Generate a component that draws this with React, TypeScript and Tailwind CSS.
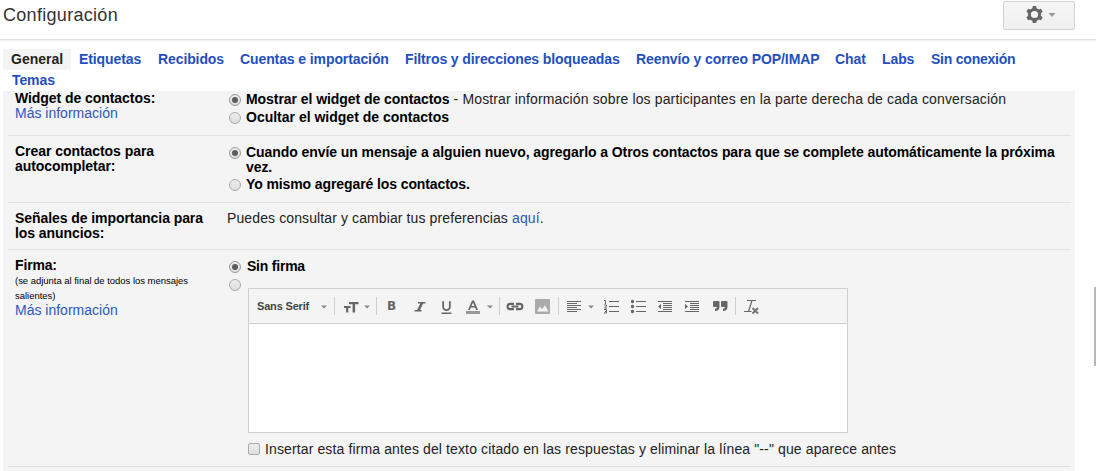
import React from "react";
import { MdFormatUnderlined } from "react-icons/md";

function Radio({ checked = false }: { checked?: boolean }) {
  return (
    <span className={"flex size-3 shrink-0 items-center justify-center rounded-full border bg-linear-to-b from-[#eeeeee] to-[#dedede] " + (checked ? "border-[#999]" : "border-[#aaa]")}>
      {checked && <span className="size-1.5 rounded-full bg-[#5c5c5c]" />}
    </span>
  );
}

function Caret() {
  return (
    <svg className="block" width="6" height="20" viewBox="0 0 6 20">
      <path d="M0 8.5h6L3 11.5z" fill="#888" />
    </svg>
  );
}

function Separator() {
  return <div className="mt-[8px] h-[18px] w-px bg-[#cfcfcf]" />;
}

function Cell({ width, children }: { width: number; children: React.ReactNode }) {
  return (
    <div className="shrink-0 pt-[8px]" style={{ width }}>
      {children}
    </div>
  );
}

function Icon({ children, w = 16 }: { children: React.ReactNode; w?: number }) {
  return (
    <svg className="block" width={w} height="20" viewBox={`0 0 ${w} 20`} fill="#666">
      {children}
    </svg>
  );
}

function Toolbar() {
  return (
    <div className="flex h-[35px] border-b border-[#cfcfcf] bg-[#f4f4f4] pl-2">
      <Cell width={64}>
        <span className="block text-[11px] leading-[19px] font-bold tracking-[-0.17px] text-[#444]">Sans Serif</span>
      </Cell>
      <Cell width={13}><Caret /></Cell>
      <Separator />
      <div className="w-[9px]" />
      <Cell width={20}>
        <Icon><path d="M5 5h9.5v2.3h-3.4v8.2H8.6V7.3H5zM0 9h6.5v2H4.3v4.5H2.1V11H0z" /></Icon>
      </Cell>
      <Cell width={12}><Caret /></Cell>
      <Separator />
      <div className="w-[7px]" />
      <Cell width={27}><span className="block pl-[3px] font-['DejaVu_Sans',sans-serif] text-[12px] leading-[19px] font-bold text-[#666]">B</span></Cell>
      <Cell width={27}>
        <Icon><path d="M7 5.700h7.500M3.500 13.700h7M10.700 5.700 7.300 13.700" fill="none" stroke="#666" strokeWidth="1.500" /><path d="M9.600 6h2.800L8.700 13.500H5.900z" /></Icon>
      </Cell>
      <Cell width={28}><MdFormatUnderlined className="mt-[2px] size-[17px] text-[#666]" /></Cell>
      <Cell width={21}>
        <Icon>
          <path d="M6 3.500h2L12 13h-1.900l-1-2.500H4.900L3.900 13H2zM7 5.400 5.500 9h3z" />
          <path d="M0 14h14v3H0z" fill="#999" />
        </Icon>
      </Cell>
      <Cell width={12}><Caret /></Cell>
      <Separator />
      <div className="w-[6px]" />
      <Cell width={29}>
        <Icon w={18}>
          <path d="M8 6.900H4.200a2.600 2.600 0 0 0 0 5.200H8M10 6.900h3.800a2.600 2.600 0 0 1 0 5.200H10M5.500 9.500h7" fill="none" stroke="#666" strokeWidth="2.100" />
        </Icon>
      </Cell>
      <Cell width={23}>
        <Icon>
          <path d="M1 2h13A1 1 0 0 1 15 3v13a1 1 0 0 1-1 1H1a1 1 0 0 1-1-1V3A1 1 0 0 1 1 2z" fill="#aaa" />
          <path d="M2 14.500 5 9.500l2 2.800 3-4 3.500 6.200z" fill="#f4f4f4" />
        </Icon>
      </Cell>
      <Separator />
      <div className="w-2" />
      <Cell width={21}>
        <Icon><path d="M0 4h14v1H0zM0 6h10v1H0zM0 8h14v1H0zM0 10h10v1H0zM0 12h14v1H0zM0 14h10v1H0z" /></Icon>
      </Cell>
      <Cell width={16}><Caret /></Cell>
      <Cell width={27}>
        <Icon>
          <path d="M5 4h10v1H5zM5 9h10v1H5zM5 14h10v1H5z" />
          <path d="M0 3.500h1.500v3.500M0 8h2.500v1L.5 11H3M0 12.500h2.500v3.500H0M1 14.500h1.500" fill="none" stroke="#666" />
        </Icon>
      </Cell>
      <Cell width={27}>
        <Icon>
          <path d="M5 4h10v1H5zM5 9h10v1H5zM5 14h10v1H5z" />
          <circle cx="1.500" cy="4.500" r="1.700" /><circle cx="1.500" cy="9.500" r="1.700" /><circle cx="1.500" cy="14.500" r="1.700" />
        </Icon>
      </Cell>
      <Cell width={27}>
        <Icon><path d="M0 4h14v1H0zM5 6h9v1H5zM5 8h9v1H5zM5 10h9v1H5zM5 12h9v1H5zM0 14h14v1H0zM3 7v5L0 9.500z" /></Icon>
      </Cell>
      <Cell width={28}>
        <Icon><path d="M0 4h14v1H0zM5 6h9v1H5zM5 8h9v1H5zM5 10h9v1H5zM5 12h9v1H5zM0 14h14v1H0zM0 7v5L3 9.500z" /></Icon>
      </Cell>
      <Cell width={22}>
        <Icon><path d="M1 4h4.500v0Q6.500 4 6.500 5v4.500Q6.500 14 2 14v-2.200Q4 11.500 4 10H1Q0 10 0 9V5Q0 4 1 4zM9 4h4.500Q14.500 4 14.500 5v4.500Q14.500 14 10 14v-2.200Q12 11.500 12 10H9Q8 10 8 9V5Q8 4 9 4z" /></Icon>
      </Cell>
      <Separator />
      <div className="w-2" />
      <Cell width={18}>
        <Icon>
          <path d="M3 3.500h9M8 3.500 4.500 14.500M0 14.500h7.500" fill="none" stroke="#666" strokeWidth="1.200" />
          <path d="m8.500 11 5.500 5.500m0-5.500L8.500 16.500" fill="none" stroke="#777" strokeWidth="2" />
        </Icon>
      </Cell>
    </div>
  );
}

const tabs = [
  { label: "Etiquetas", cls: "w-[79px]" },
  { label: "Recibidos", cls: "w-[82px]" },
  { label: "Cuentas e importación", cls: "w-[165px]" },
  { label: "Filtros y direcciones bloqueadas", cls: "w-[231px]" },
  { label: "Reenvío y correo POP/IMAP", cls: "w-[199px]" },
  { label: "Chat", cls: "w-[47px]" },
  { label: "Labs", cls: "w-[49px]" },
  { label: "Sin conexión", cls: "w-[90px] tracking-[-0.23px]" },
];

export default function App() {
  return (
    <div className="relative h-[471px] w-[1096px] overflow-hidden bg-white font-['Liberation_Sans',Arial,sans-serif] text-[14px] leading-[15px] text-[#222]">
      <header className="flex h-10 justify-between border-b border-[#e0e0e0] pr-[21px] pl-[3px] shadow-[0_1px_2px_#eeeeee]">
        <h1 className="pt-[5px] text-[18px] leading-5 tracking-[0.3px] text-[#333]">Configuración</h1>
        <button className="mt-px flex h-[29px] w-[72px] items-center rounded-[2px] border border-[#d3d3d3] bg-linear-to-b from-[#f5f5f5] to-[#f0f0f0] pb-[2px] pl-[22px]" aria-label="Configuración">
          <svg width="17" height="17" viewBox="-8.500 -8.500 17 17" fill="#666">
            <circle r="5.100" fill="none" stroke="#666" strokeWidth="3" />
            {[0, 60, 120, 180, 240, 300].map((a) => (
              <path key={a} d="M-2.300-5.300-1.700-8.400H1.700L2.300-5.300z" transform={`rotate(${a})`} />
            ))}
          </svg>
          <svg className="ml-[5px]" width="8" height="4" viewBox="0 0 8 4"><path d="M.5 0h7L4 4z" fill="#999" /></svg>
        </button>
      </header>

      <nav className="mt-[9px] ml-[3px] h-[42px] font-bold whitespace-nowrap text-[#1f4fbf]">
        <div className="flex h-[21px]">
          <span className="w-[68px] bg-[#f4f4f4] pt-[3px] pl-2 text-[#222]">General</span>
          <div className="flex pt-[3px] pl-2 tracking-[-0.1px]">
            {tabs.map((t) => <a key={t.label} className={t.cls}>{t.label}</a>)}
          </div>
        </div>
        <a className="block pt-[3px] pl-[9px] tracking-[-0.1px]">Temas</a>
      </nav>

      <main className="ml-[3px] h-[380px] w-[1072px] bg-[#f4f4f4] pr-1 pl-[5px] text-black">
        <section className="flex h-[45px] border-b border-[#e2e2e2] pl-[7px]">
          <div className="w-[214px]">
            <div className="font-bold tracking-[-0.06px]">Widget de contactos:</div>
            <a className="text-[#3056bd]">Más información</a>
          </div>
          <div className="whitespace-nowrap">
            <div className="flex h-[18px] items-center gap-[5px]">
              <Radio checked />
              <span className="pb-[2px] tracking-[0.135px] text-[#222]"><b className="tracking-[-0.06px] text-black">Mostrar el widget de contactos</b> - Mostrar información sobre los participantes en la parte derecha de cada conversación</span>
            </div>
            <div className="flex h-[18px] items-center gap-[5px] font-bold"><Radio /><span className="pb-[2px]">Ocultar el widget de contactos</span></div>
          </div>
        </section>

        <section className="flex h-[67px] border-b border-[#e2e2e2] pt-2 pl-[7px] font-bold">
          <div className="w-[214px] tracking-[-0.05px]">Crear contactos para<br />autocompletar:</div>
          <div className="pt-px tracking-[-0.071px] whitespace-nowrap">
            <div className="flex gap-[5px]">
              <div className="pt-[2px]"><Radio checked /></div>
              <div>Cuando envíe un mensaje a alguien nuevo, agregarlo a Otros contactos para que se complete automáticamente la próxima<br />vez.</div>
            </div>
            <div className="mt-[2px] flex gap-[5px]"><div className="pt-[2px]"><Radio /></div><span className="tracking-[-0.1px]">Yo mismo agregaré los contactos.</span></div>
          </div>
        </section>

        <section className="flex h-[47px] border-b border-[#e2e2e2] pt-2 pl-[7px]">
          <div className="w-[212px] font-bold tracking-[-0.07px]">Señales de importancia para<br />los anuncios:</div>
          <div className="tracking-[0.11px] text-[#222]">Puedes consultar y cambiar tus preferencias <a className="text-[#3056bd]">aquí</a>.</div>
        </section>

        <section className="flex h-[217px] border-b border-[#dedede] pt-2 pl-[7px]">
          <div className="w-[214px]">
            <div className="font-bold tracking-[-0.15px]">Firma:</div>
            <div className="text-[9.500px] leading-[15px] tracking-[-0.03px] whitespace-nowrap">(se adjunta al final de todos los mensajes<br />salientes)</div>
            <a className="text-[#3056bd]">Más información</a>
          </div>
          <div className="w-[700px] whitespace-nowrap">
            <div className="flex h-[18px] items-center gap-[6px] font-bold"><Radio checked /><span className="pb-[2px] tracking-[-0.22px]">Sin firma</span></div>
            <div className="flex gap-[7px]">
              <div className="pt-[3px]"><Radio /></div>
              <div className="pt-3">
                <div className="h-[145px] w-[600px] border border-[#cfcfcf] bg-white"><Toolbar /></div>
                <label className="mt-[9px] flex gap-[5px] text-[#222]">
                  <span className="mt-px size-3 rounded-[2px] border border-[#aaa] bg-linear-to-b from-[#eeeeee] to-[#dedede]" />
                  <span className="tracking-[0.122px]">Insertar esta firma antes del texto citado en las respuestas y eliminar la línea "--" que aparece antes</span>
                </label>
              </div>
            </div>
          </div>
        </section>
      </main>
      <div className="absolute top-[287px] right-0 h-[79px] w-[2px] bg-[#b8b8b8]" />
    </div>
  );
}
